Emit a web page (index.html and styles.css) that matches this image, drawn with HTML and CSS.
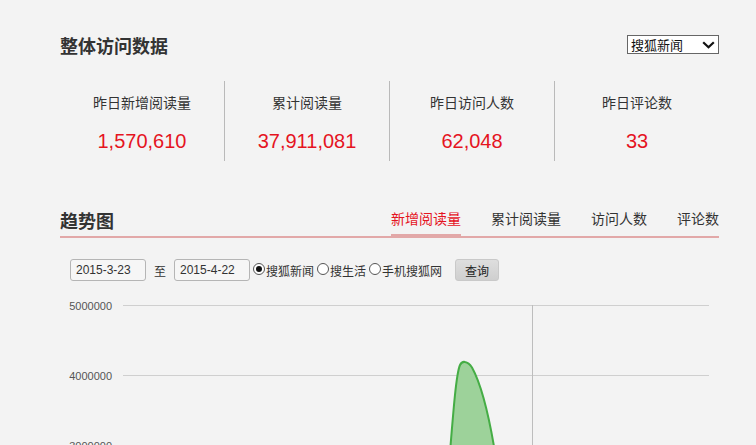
FILE: index.html
```html
<!DOCTYPE html>
<html lang="zh">
<head>
<meta charset="utf-8">
<title>整体访问数据</title>
<link rel="stylesheet" href="styles.css">
</head>
<body>
<div class="page">
  <div class="head">
    <h2 class="title">整体访问数据</h2>
    <div class="select-wrap">
      <select class="site-select">
        <option>搜狐新闻</option>
        <option>搜生活</option>
        <option>手机搜狐网</option>
      </select>
      <svg class="chev" width="13" height="8" viewBox="0 0 13 8"><path d="M1.2 1.2 L6.5 6.3 L11.8 1.2" fill="none" stroke="#111" stroke-width="2.2"/></svg>
    </div>
  </div>

  <div class="stats">
    <div class="stat"><div class="label">昨日新增阅读量</div><div class="num">1,570,610</div></div>
    <div class="stat"><div class="label">累计阅读量</div><div class="num">37,911,081</div></div>
    <div class="stat"><div class="label">昨日访问人数</div><div class="num">62,048</div></div>
    <div class="stat"><div class="label">昨日评论数</div><div class="num">33</div></div>
  </div>

  <div class="trend-head">
    <h2 class="title">趋势图</h2>
    <ul class="tabs">
      <li class="tab active">新增阅读量</li>
      <li class="tab">累计阅读量</li>
      <li class="tab">访问人数</li>
      <li class="tab">评论数</li>
    </ul>
  </div>

  <div class="controls">
    <input class="date" type="text" value="2015-3-23">
    <span class="to">至</span>
    <input class="date" type="text" value="2015-4-22">
    <label class="radio"><input type="radio" name="site" checked>搜狐新闻</label>
    <label class="radio"><input type="radio" name="site">搜生活</label>
    <label class="radio"><input type="radio" name="site">手机搜狐网</label>
    <button class="query">查询</button>
  </div>

  <div class="chart">
    <svg width="659" height="156" viewBox="0 0 659 156">
      <g stroke="#cfcfcf" stroke-width="1">
        <line x1="63" y1="15.5" x2="649" y2="15.5"/>
        <line x1="63" y1="85.5" x2="649" y2="85.5"/>
        <line x1="63" y1="155.5" x2="649" y2="155.5"/>
      </g>
      <line x1="472.5" y1="15" x2="472.5" y2="160" stroke="#bdbdbd" stroke-width="1"/>
      <g class="ylab">
        <text x="52" y="19.5" text-anchor="end">5000000</text>
        <text x="52" y="89.5" text-anchor="end">4000000</text>
        <text x="52" y="159.5" text-anchor="end">3000000</text>
      </g>
      <path d="M389,175 C393,125 396,84 400,75 C401.5,72 403,71.5 405,72 C408,72.5 410,74.5 412,77.5 C420,92 429,122 437,175 Z" fill="#9dd29a" stroke="none"/>
      <path d="M389,175 C393,125 396,84 400,75 C401.5,72 403,71.5 405,72 C408,72.5 410,74.5 412,77.5 C420,92 429,122 437,175" fill="none" stroke="#45ad45" stroke-width="2"/>
    </svg>
  </div>
</div>
</body>
</html>
```

FILE: styles.css
```css
* { box-sizing: border-box; }
html, body {
  margin: 0;
  padding: 0;
  background: #f3f3f3;
  font-family: "Noto Sans CJK SC", "Liberation Sans", sans-serif;
  color: #333;
  overflow: hidden;
}
.page {
  width: 659px;
  margin-left: 60px;
}
.head {
  display: flex;
  justify-content: space-between;
  align-items: flex-start;
  padding-top: 33px;
  height: 56px;
}
.title {
  margin: 0;
  font-size: 18px;
  font-weight: bold;
  color: #333;
  line-height: 24px;
}
.select-wrap {
  position: relative;
  width: 92px;
  height: 19px;
  margin-top: 2px;
}
.site-select {
  display: block;
  -webkit-appearance: none;
  appearance: none;
  width: 92px;
  height: 19px;
  border: 1px solid #666;
  background: #fff;
  font-family: "Noto Sans CJK SC", sans-serif;
  font-size: 13px;
  line-height: 17px;
  padding: 0 0 0 3px;
  margin: 0;
  color: #111;
  border-radius: 0;
}
.chev {
  position: absolute;
  right: 4px;
  top: 6px;
  pointer-events: none;
}
.stats {
  display: flex;
  margin-top: 25px;
  height: 80px;
}
.stat {
  flex: 1;
  text-align: center;
  border-left: 1px solid #b9b9b9;
}
.stat:first-child { border-left: none; }
.label {
  font-size: 14px;
  line-height: 20px;
  padding-top: 11px;
  color: #333;
}
.num {
  font-family: "Liberation Sans", "Noto Sans CJK SC", sans-serif;
  font-size: 20px;
  line-height: 24px;
  margin-top: 17px;
  color: #e5141f;
}
.trend-head {
  display: flex;
  justify-content: space-between;
  align-items: flex-end;
  margin-top: 45px;
  border-bottom: 2px solid #e2a8a8;
  height: 32px;
}
.trend-head .title { padding-bottom: 4px; }
.tabs {
  display: flex;
  list-style: none;
  margin: 0;
  padding: 0;
  gap: 30px;
}
.tab {
  font-size: 14px;
  line-height: 20px;
  padding-bottom: 6px;
  color: #333;
  margin-bottom: -2px;
  border-bottom: 4px solid transparent;
}
.tab.active {
  color: #e5141f;
  border-bottom-color: #e2a8a8;
}
.controls {
  display: flex;
  align-items: center;
  padding-left: 10px;
  margin-top: 21px;
  height: 22px;
}
.date {
  width: 76px;
  height: 22px;
  border: 1px solid #b5b5b5;
  border-radius: 3px;
  background: #f6f6f6;
  font-family: "Liberation Sans", sans-serif;
  font-size: 12px;
  color: #333;
  padding: 0 0 0 5px;
  margin: 0;
}
.to {
  font-size: 12px;
  margin: 0 8px 0 8px;
}
.radio {
  display: flex;
  align-items: center;
  font-size: 12px;
  color: #333;
  margin-left: 3px;
}
.radio:first-of-type { margin-left: 3px; }
.radio input {
  -webkit-appearance: none;
  appearance: none;
  width: 12px;
  height: 12px;
  margin: 0 1px 2px 0;
  border: 1px solid #555;
  border-radius: 50%;
  background: #fff;
  position: relative;
  flex: none;
}
.radio input:checked::after {
  content: "";
  position: absolute;
  left: 2px;
  top: 2px;
  width: 6px;
  height: 6px;
  border-radius: 50%;
  background: #111;
}
.query {
  margin-left: 13px;
  width: 44px;
  height: 22px;
  border: 1px solid #c9c9c9;
  border-radius: 3px;
  background: linear-gradient(#dedede, #cfcfcf);
  font-family: "Noto Sans CJK SC", sans-serif;
  font-size: 12px;
  color: #222;
  padding: 0;
}
.chart {
  margin-top: 9px;
  height: 156px;
}
.chart svg { display: block; }
.ylab text {
  font-family: "Liberation Sans", sans-serif;
  font-size: 11px;
  fill: #555;
}
```
